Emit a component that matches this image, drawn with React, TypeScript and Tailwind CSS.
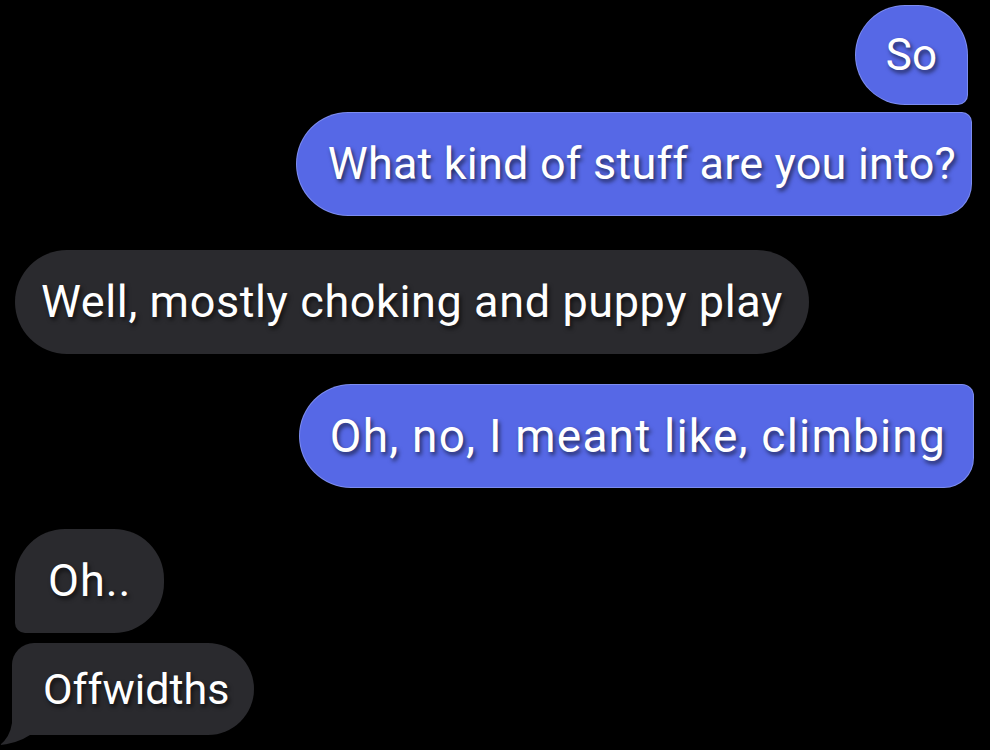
import React from "react";

const textCls =
    "font-['Roboto',sans-serif] leading-[50px] text-white whitespace-nowrap [text-shadow:2px_3px_4px_rgba(0,0,0,0.6)]";

const Sent: React.FC<{ children: React.ReactNode; className?: string; text?: string }> = ({ children, className, text }) => (
    <div className={"self-end bg-[#5668e6] border border-[#8d9bf2]/70 " + (className ?? "")}>
        <span className={textCls + " " + (text ?? "")}>{children}</span>
    </div>
);

const Received: React.FC<{ children: React.ReactNode; className?: string; text?: string }> = ({ children, className, text }) => (
    <div className={"relative self-start bg-[#2a2a2e] " + (className ?? "")}>
        <span className={textCls + " " + (text ?? "")}>{children}</span>
    </div>
);

export default function App() {
    return (
        <div className="w-[990px] h-[750px] overflow-hidden bg-black flex flex-col pt-[5px] pl-[14px] pr-[16px]">
            <Sent className="mr-[6px] py-[24px] px-[30px] rounded-[50px] rounded-br-[10px]" text="text-[44px]">
                So
            </Sent>
            <Sent
                className="mt-[7px] mr-[2px] py-[26px] pl-[31px] pr-[15px] rounded-l-[52px] rounded-tr-[10px] rounded-br-[32px]"
                text="text-[45px] tracking-[0.2px]"
            >
                What kind of stuff are you into?
            </Sent>

            <Received className="mt-[34px] ml-[1px] py-[27px] px-[26px] rounded-[52px]" text="text-[45px] tracking-[0.6px]">
                Well, mostly choking and puppy play
            </Received>

            <Sent
                className="mt-[30px] py-[26px] pl-[30px] pr-[27px] rounded-l-[52px] rounded-tr-[12px] rounded-br-[30px]"
                text="text-[46px] tracking-[1.2px]"
            >
                Oh, no, I meant like, climbing
            </Sent>

            <Received className="mt-[41px] ml-[1px] py-[27px] px-[33px] rounded-[50px] rounded-bl-[10px]" text="text-[45px] tracking-[1px]">
                Oh..
            </Received>
            <Received
                className="mt-[10px] -ml-[2px] py-[21px] pl-[31px] pr-[25px] rounded-[46px] rounded-tl-[22px] rounded-bl-none"
                text="text-[43px]"
            >
                Offwidths
                <svg className="absolute left-[-12px] bottom-[-10px]" width="40" height="30" viewBox="0 0 40 30">
                    <path d="M12 0 L12 8 Q10 22 0 30 Q18 28 30 20 L40 20 L40 0 Z" fill="#2a2a2e" />
                </svg>
            </Received>
        </div>
    );
}
